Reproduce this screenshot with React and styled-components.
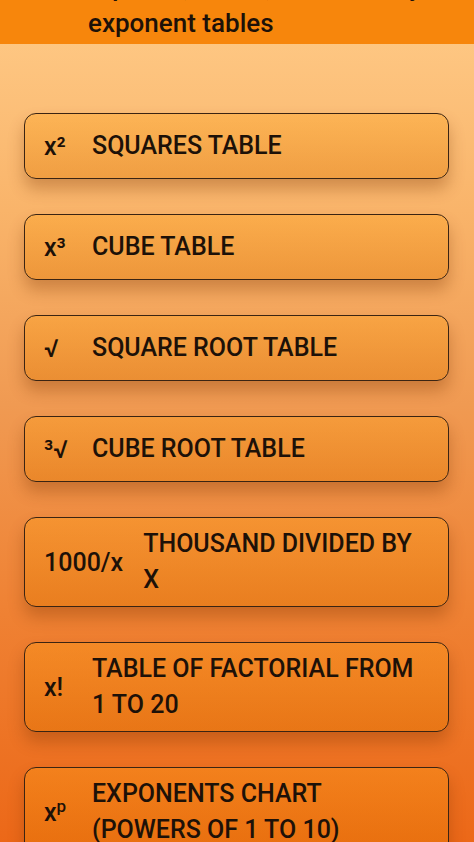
import React from 'react'
import styled, { createGlobalStyle } from 'styled-components'

const GlobalStyle = createGlobalStyle`
  html, body {
    margin: 0;
    padding: 0;
    height: 100%;
    overflow: hidden;
  }
  body {
    font-family: Roboto, "Noto Sans", "Liberation Sans", sans-serif;
    background: #ef6c18;
  }
`;

const Screen = styled.div`
  height: 842px;
  overflow: hidden;
  display: flex;
  flex-direction: column;
  background: linear-gradient(180deg, #ffcb88 0%, #f9b46a 25%, #f09a52 48%, #ef8234 72%, #ec6818 100%);
`;

const AppBar = styled.header`
  flex: none;
  height: 44px;
  overflow: hidden;
  background: #f7860c;
  padding-left: 88px;
`;

const Title = styled.h1`
  margin: -31px 0 0;
  font-size: 26px;
  line-height: 36px;
  font-weight: 500;
  color: #1d1108;
  white-space: nowrap;
`;

const List = styled.main`
  display: flex;
  flex-direction: column;
  gap: 35px;
  padding: 69px 25px 0 24px;
`;

const Card = styled.button`
  display: flex;
  align-items: center;
  gap: 20px;
  min-height: 66px;
  padding: 8px 20px 8px 19px;
  box-sizing: border-box;
  border: 1.5px solid #3b2412;
  border-radius: 12px;
  background: linear-gradient(180deg, rgba(255, 160, 20, 0.34), rgba(225, 120, 0, 0.4));
  box-shadow: 0 10px 16px rgba(120, 50, 0, 0.32);
  text-align: left;
  font-family: inherit;
  color: #1d1108;
  cursor: pointer;
`;

const Symbol = styled.span`
  flex: none;
  min-width: 28px;
  font-size: 25px;
  font-weight: 500;
`;

const Label = styled.span`
  font-size: 25px;
  line-height: 36px;
  font-weight: 500;
`;

const tables = [
  { symbol: 'x²', label: 'SQUARES TABLE' },
  { symbol: 'x³', label: 'CUBE TABLE' },
  { symbol: '√', label: 'SQUARE ROOT TABLE' },
  { symbol: '³√', label: 'CUBE ROOT TABLE' },
  { symbol: '1000/x', label: 'THOUSAND DIVIDED BY X' },
  { symbol: 'x!', label: 'TABLE OF FACTORIAL FROM 1 TO 20' },
  { symbol: <>x<sup style={{ fontSize: '17px' }}>p</sup></>, label: 'EXPONENTS CHART (POWERS OF 1 TO 10)' },
]

export default function App() {
  return (
    <>
      <GlobalStyle />
      <Screen>
        <AppBar>
          <Title>
            Squares, cubes, roots &amp; easy
            <br />
            exponent tables
          </Title>
        </AppBar>
        <List>
          {tables.map((t, i) => (
            <Card key={i}>
              <Symbol>{t.symbol}</Symbol>
              <Label>{t.label}</Label>
            </Card>
          ))}
        </List>
      </Screen>
    </>
  )
}
